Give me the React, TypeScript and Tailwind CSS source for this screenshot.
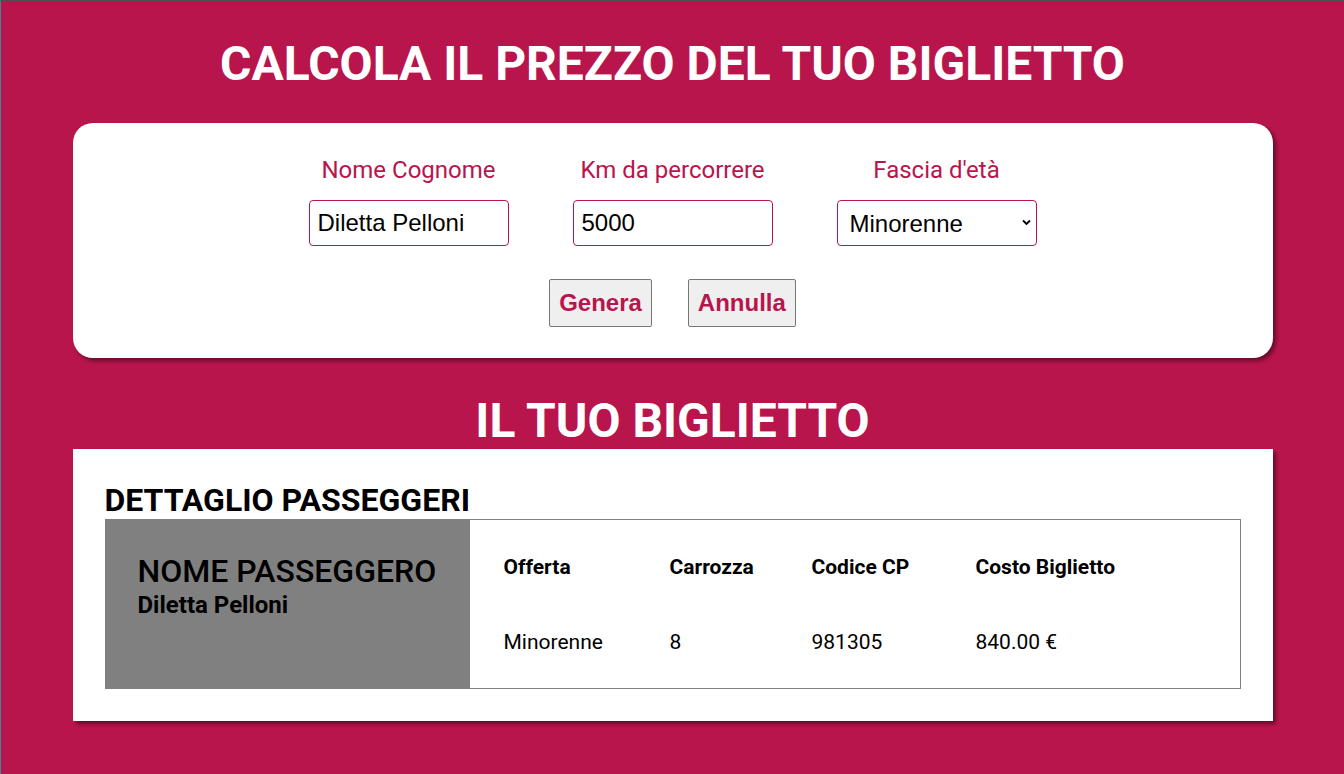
import React from "react";

export default function App() {
  const crimson = "text-[#b9154d]";
  return (
    <div className="min-h-screen bg-[#b9154d] border-t border-[#505050] border-l border-l-[#3a8796] font-['Roboto',_'Liberation_Sans',_sans-serif]">
      <div className="w-[1200px] mx-auto pt-[35px] pb-[53px]">
        <h1 className="text-[48px] leading-[56px] font-bold text-white text-center mb-[31px]">
          CALCOLA IL PREZZO DEL TUO BIGLIETTO
        </h1>

        <div className="bg-white rounded-[20px] shadow-[3px_3px_4px_rgba(0,0,0,0.45)] pt-[34px] pb-[31px] flex flex-col items-center">
          <div className="flex gap-[64px]">
            <div className="flex flex-col items-center w-[200px]">
              <label className={`text-[24px] leading-[26px] whitespace-nowrap ${crimson}`}>Nome Cognome</label>
              <input
                type="text"
                defaultValue="Diletta Pelloni"
                className="mt-[17px] w-[200px] h-[46px] border border-[#b9154d] rounded-[4px] px-[8px] text-[24px] text-black font-['Liberation_Sans',_Arial,_sans-serif] outline-none"
              />
            </div>
            <div className="flex flex-col items-center w-[200px]">
              <label className={`text-[24px] leading-[26px] whitespace-nowrap ${crimson}`}>Km da percorrere</label>
              <input
                type="text"
                defaultValue="5000"
                className="mt-[17px] w-[200px] h-[46px] border border-[#b9154d] rounded-[4px] px-[8px] text-[24px] text-black font-['Liberation_Sans',_Arial,_sans-serif] outline-none"
              />
            </div>
            <div className="flex flex-col items-center w-[200px]">
              <label className={`text-[24px] leading-[26px] whitespace-nowrap ${crimson}`}>Fascia d'età</label>
              <div className="mt-[17px] relative w-[200px] h-[46px] border border-[#b9154d] rounded-[4px] flex items-center pl-[12px]">
                <span className="text-[24px] text-black font-['Liberation_Sans',_Arial,_sans-serif] mt-[1px]">Minorenne</span>
                <svg className="absolute right-[5px] top-[18px]" width="9" height="7" viewBox="0 0 9 7">
                  <path d="M1 1.5 L4.5 5 L8 1.5" fill="none" stroke="#000" strokeWidth="1.8" />
                </svg>
              </div>
            </div>
          </div>
          <div className="flex gap-[36px] mt-[33px]">
            <button className={`h-[48px] px-[9px] bg-[#efefef] border border-[#767676] rounded-[2px] text-[24px] font-bold ${crimson} font-['Liberation_Sans',_Arial,_sans-serif]`}>
              Genera
            </button>
            <button className={`h-[48px] px-[9px] bg-[#efefef] border border-[#767676] rounded-[2px] text-[24px] font-bold ${crimson} font-['Liberation_Sans',_Arial,_sans-serif]`}>
              Annulla
            </button>
          </div>
        </div>

        <h2 className="text-[48px] leading-[56px] font-bold text-white text-center mt-[35px]">
          IL TUO BIGLIETTO
        </h2>

        <div className="bg-white shadow-[3px_3px_4px_rgba(0,0,0,0.45)] p-[32px]">
          <h3 className="text-[32px] leading-[38px] font-bold text-black">DETTAGLIO PASSEGGERI</h3>
          <div className="flex border border-[#808080] h-[170px]">
            <div className="w-[364px] bg-[#808080] pt-[33px] pl-[32px] text-black">
              <div className="text-[32px] leading-[37px] font-medium">NOME PASSEGGERO</div>
              <div className="text-[24px] leading-[30px] font-bold">Diletta Pelloni</div>
            </div>
            <div className="flex-1 pl-[34px] pt-[35px] grid grid-cols-[166px_142px_164px_1fr] gap-y-[51px] content-start text-[21px] leading-[24px] text-black">
              <div className="font-bold">Offerta</div>
              <div className="font-bold">Carrozza</div>
              <div className="font-bold">Codice CP</div>
              <div className="font-bold">Costo Biglietto</div>
              <div>Minorenne</div>
              <div>8</div>
              <div>981305</div>
              <div>840.00 €</div>
            </div>
          </div>
        </div>
      </div>
    </div>
  );
}
